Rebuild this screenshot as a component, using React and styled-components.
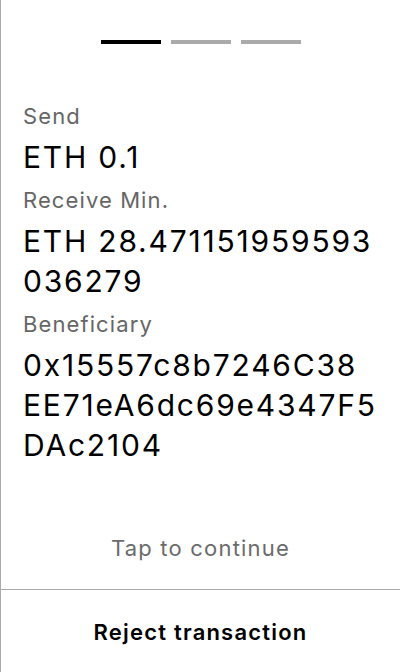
import styled, { createGlobalStyle } from 'styled-components';

const GlobalStyle = createGlobalStyle`
  html, body {
    margin: 0;
    padding: 0;
    background: #ffffff;
  }
  body {
    font-family: Inter, "Noto Sans", sans-serif;
  }
`;

const Screen = styled.div`
  height: 672px;
  box-sizing: border-box;
  border-left: 1px solid #aaaaaa;
  display: flex;
  flex-direction: column;
  background: #ffffff;
`;

const Steps = styled.div`
  display: flex;
  justify-content: center;
  gap: 10px;
  padding-top: 40px;
`;

const Step = styled.div`
  width: 60px;
  height: 4px;
  background: ${(p) => (p.$active ? '#000000' : '#aaaaaa')};
`;

const Details = styled.div`
  flex: 1;
  display: flex;
  flex-direction: column;
  gap: 9px;
  padding: 58px 22px 0 22px;
`;

const Field = styled.div`
  display: flex;
  flex-direction: column;
`;

const Label = styled.div`
  font-size: 22px;
  line-height: 28px;
  letter-spacing: 1.1px;
  color: #666666;
  margin-bottom: 7px;
`;

const Value = styled.div`
  font-size: 30px;
  line-height: 40px;
  letter-spacing: 1.8px;
  color: #000000;
  word-break: break-all;
`;

const ValueLine = styled.span`
  display: block;
`;

const Hint = styled.div`
  text-align: center;
  font-size: 22px;
  line-height: 28px;
  letter-spacing: 1.2px;
  color: #6b6b6b;
  padding-bottom: 27px;
`;

const Footer = styled.button`
  height: 83px;
  border: none;
  border-top: 1px solid #aaaaaa;
  background: #ffffff;
  font-family: Inter, "Noto Sans", sans-serif;
  font-size: 22px;
  font-weight: 600;
  letter-spacing: 1.2px;
  color: #000000;
  padding: 2px 0 0;
  cursor: pointer;
`;

// long values are shown split the way the device wraps them
const fields = [
  { label: 'Send', lines: ['ETH 0.1'] },
  { label: 'Receive Min.', lines: ['ETH 28.471151959593', '036279'] },
  { label: 'Beneficiary', lines: ['0x15557c8b7246C38', 'EE71eA6dc69e4347F5', 'DAc2104'] },
];

function App() {
  return (
    <>
      <GlobalStyle />
      <Screen>
        <Steps>
          <Step $active />
          <Step />
          <Step />
        </Steps>
        <Details>
          {fields.map((f) => (
            <Field key={f.label}>
              <Label>{f.label}</Label>
              <Value>
                {f.lines.map((line) => (
                  <ValueLine key={line}>{line}</ValueLine>
                ))}
              </Value>
            </Field>
          ))}
        </Details>
        <Hint>Tap to continue</Hint>
        <Footer>Reject transaction</Footer>
      </Screen>
    </>
  );
}

export default App;
